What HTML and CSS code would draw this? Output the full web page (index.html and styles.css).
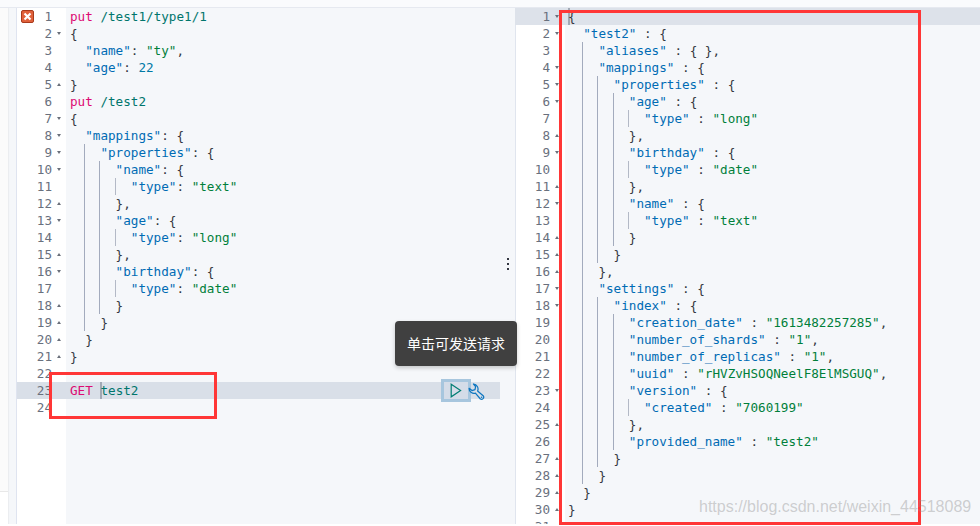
FILE: index.html
```html
<!DOCTYPE html>
<html lang="zh">
<head>
<meta charset="utf-8">
<title>Console</title>
<link rel="stylesheet" href="styles.css">
</head>
<body>
<div class="topbar"></div>
<div class="main">
  <div class="rail"><div class="rail-edge"></div></div>
  <section class="editor left">
    <div class="gutter">
      <div class="gl"><svg class="err" viewBox="0 0 13 13"><rect x="0.5" y="0.5" width="12" height="12" rx="1.5" fill="#e0603a" stroke="#a83a1c"/><path d="M3.5 3.5l6 6M9.5 3.5l-6 6" stroke="#fff" stroke-width="2.2"/></svg><span>1</span><i></i></div>
      <div class="gl"><span>2</span><i class="dn"></i></div>
      <div class="gl"><span>3</span><i></i></div>
      <div class="gl"><span>4</span><i></i></div>
      <div class="gl"><span>5</span><i class="up"></i></div>
      <div class="gl"><span>6</span><i></i></div>
      <div class="gl"><span>7</span><i class="dn"></i></div>
      <div class="gl"><span>8</span><i class="dn"></i></div>
      <div class="gl"><span>9</span><i class="dn"></i></div>
      <div class="gl"><span>10</span><i class="dn"></i></div>
      <div class="gl"><span>11</span><i></i></div>
      <div class="gl"><span>12</span><i class="up"></i></div>
      <div class="gl"><span>13</span><i class="dn"></i></div>
      <div class="gl"><span>14</span><i></i></div>
      <div class="gl"><span>15</span><i class="up"></i></div>
      <div class="gl"><span>16</span><i class="dn"></i></div>
      <div class="gl"><span>17</span><i></i></div>
      <div class="gl"><span>18</span><i class="up"></i></div>
      <div class="gl"><span>19</span><i class="up"></i></div>
      <div class="gl"><span>20</span><i class="up"></i></div>
      <div class="gl"><span>21</span><i class="up"></i></div>
      <div class="gl"><span>22</span><i></i></div>
      <div class="gl active"><span>23</span><i></i></div>
      <div class="gl"><span>24</span><i></i></div>
    </div>
    <div class="code">
<div class="ln"><b class="m">put</b> <b class="u">/test1/type1/1</b></div>
<div class="ln">{</div>
<div class="ln">  <b class="k">"name"</b>: <b class="s">"ty"</b>,</div>
<div class="ln">  <b class="k">"age"</b>: <b class="n">22</b></div>
<div class="ln">}</div>
<div class="ln"><b class="m">put</b> <b class="u">/test2</b></div>
<div class="ln">{</div>
<div class="ln">  <b class="k">"mappings"</b>: {</div>
<div class="ln">  <u>  </u><b class="k">"properties"</b>: {</div>
<div class="ln">  <u>  </u><u>  </u><b class="k">"name"</b>: {</div>
<div class="ln">  <u>  </u><u>  </u><u class="t">  </u><b class="k">"type"</b>: <b class="s">"text"</b></div>
<div class="ln">  <u>  </u><u>  </u>},</div>
<div class="ln">  <u>  </u><u>  </u><b class="k">"age"</b>: {</div>
<div class="ln">  <u>  </u><u>  </u><u class="t">  </u><b class="k">"type"</b>: <b class="s">"long"</b></div>
<div class="ln">  <u>  </u><u>  </u>},</div>
<div class="ln">  <u>  </u><u>  </u><b class="k">"birthday"</b>: {</div>
<div class="ln">  <u>  </u><u>  </u><u class="t">  </u><b class="k">"type"</b>: <b class="s">"date"</b></div>
<div class="ln">  <u>  </u><u>  </u>}</div>
<div class="ln">  <u>  </u>}</div>
<div class="ln">  }</div>
<div class="ln">}</div>
<div class="ln"> </div>
<div class="ln active"><b class="m">GET</b> <b class="u caret">t</b><b class="u">est2</b></div>
<div class="ln"> </div>
    </div>
  </section>
  <div class="resizer"><span></span><span></span><span></span></div>
  <section class="editor right">
    <div class="gutter">
      <div class="gl active"><span>1</span><i class="dn"></i></div>
      <div class="gl"><span>2</span><i class="dn"></i></div>
      <div class="gl"><span>3</span><i></i></div>
      <div class="gl"><span>4</span><i class="dn"></i></div>
      <div class="gl"><span>5</span><i class="dn"></i></div>
      <div class="gl"><span>6</span><i class="dn"></i></div>
      <div class="gl"><span>7</span><i></i></div>
      <div class="gl"><span>8</span><i class="up"></i></div>
      <div class="gl"><span>9</span><i class="dn"></i></div>
      <div class="gl"><span>10</span><i></i></div>
      <div class="gl"><span>11</span><i class="up"></i></div>
      <div class="gl"><span>12</span><i class="dn"></i></div>
      <div class="gl"><span>13</span><i></i></div>
      <div class="gl"><span>14</span><i class="up"></i></div>
      <div class="gl"><span>15</span><i class="up"></i></div>
      <div class="gl"><span>16</span><i class="up"></i></div>
      <div class="gl"><span>17</span><i class="dn"></i></div>
      <div class="gl"><span>18</span><i class="dn"></i></div>
      <div class="gl"><span>19</span><i></i></div>
      <div class="gl"><span>20</span><i></i></div>
      <div class="gl"><span>21</span><i></i></div>
      <div class="gl"><span>22</span><i></i></div>
      <div class="gl"><span>23</span><i class="dn"></i></div>
      <div class="gl"><span>24</span><i></i></div>
      <div class="gl"><span>25</span><i class="up"></i></div>
      <div class="gl"><span>26</span><i></i></div>
      <div class="gl"><span>27</span><i class="up"></i></div>
      <div class="gl"><span>28</span><i class="up"></i></div>
      <div class="gl"><span>29</span><i class="up"></i></div>
      <div class="gl"><span>30</span><i class="up"></i></div>
      <div class="gl"><span>31</span><i></i></div>
    </div>
    <div class="code">
<div class="ln active"><b class="caret">{</b></div>
<div class="ln">  <b class="k">"test2"</b> : {</div>
<div class="ln">  <u>  </u><b class="k">"aliases"</b> : { },</div>
<div class="ln">  <u>  </u><b class="k">"mappings"</b> : {</div>
<div class="ln">  <u>  </u><u>  </u><b class="k">"properties"</b> : {</div>
<div class="ln">  <u>  </u><u>  </u><u>  </u><b class="k">"age"</b> : {</div>
<div class="ln">  <u>  </u><u>  </u><u>  </u><u class="t">  </u><b class="k">"type"</b> : <b class="s">"long"</b></div>
<div class="ln">  <u>  </u><u>  </u><u>  </u>},</div>
<div class="ln">  <u>  </u><u>  </u><u>  </u><b class="k">"birthday"</b> : {</div>
<div class="ln">  <u>  </u><u>  </u><u>  </u><u class="t">  </u><b class="k">"type"</b> : <b class="s">"date"</b></div>
<div class="ln">  <u>  </u><u>  </u><u>  </u>},</div>
<div class="ln">  <u>  </u><u>  </u><u>  </u><b class="k">"name"</b> : {</div>
<div class="ln">  <u>  </u><u>  </u><u>  </u><u class="t">  </u><b class="k">"type"</b> : <b class="s">"text"</b></div>
<div class="ln">  <u>  </u><u>  </u><u>  </u>}</div>
<div class="ln">  <u>  </u><u>  </u>}</div>
<div class="ln">  <u>  </u>},</div>
<div class="ln">  <u>  </u><b class="k">"settings"</b> : {</div>
<div class="ln">  <u>  </u><u>  </u><b class="k">"index"</b> : {</div>
<div class="ln">  <u>  </u><u>  </u><u>  </u><b class="k">"creation_date"</b> : <b class="s">"1613482257285"</b>,</div>
<div class="ln">  <u>  </u><u>  </u><u>  </u><b class="k">"number_of_shards"</b> : <b class="s">"1"</b>,</div>
<div class="ln">  <u>  </u><u>  </u><u>  </u><b class="k">"number_of_replicas"</b> : <b class="s">"1"</b>,</div>
<div class="ln">  <u>  </u><u>  </u><u>  </u><b class="k">"uuid"</b> : <b class="s">"rHVZvHSOQNeelF8ElMSGUQ"</b>,</div>
<div class="ln">  <u>  </u><u>  </u><u>  </u><b class="k">"version"</b> : {</div>
<div class="ln">  <u>  </u><u>  </u><u>  </u><u class="t">  </u><b class="k">"created"</b> : <b class="s">"7060199"</b></div>
<div class="ln">  <u>  </u><u>  </u><u>  </u>},</div>
<div class="ln">  <u>  </u><u>  </u><u>  </u><b class="k">"provided_name"</b> : <b class="s">"test2"</b></div>
<div class="ln">  <u>  </u><u>  </u>}</div>
<div class="ln">  <u>  </u>}</div>
<div class="ln">  }</div>
<div class="ln">}</div>
    </div>
  </section>
</div>
<div class="tooltip">单击可发送请求</div>
<div class="play"><svg width="12" height="15" viewBox="0 0 12 15"><path d="M1.2 1.2L10.6 7.5 1.2 13.8Z" fill="none" stroke="#017d73" stroke-width="1.2"/></svg></div>
<svg class="wrench" width="17" height="18" viewBox="0 0 17 18"><path d="M5.5 1A5 5 0 0 1 9.6 8L15.4 13A2.2 2.2 0 0 1 12.4 16L7.4 10.2A5 5 0 0 1 1.1 5.3L4 7.6 7 6.6 7.6 3.6Z" fill="none" stroke="#0f77c0" stroke-width="1.25" stroke-linejoin="round"/><circle cx="13.6" cy="14.2" r=".8" fill="#0f77c0"/></svg>
<div class="mark mark-left"></div>
<div class="mark mark-right"></div>
<div class="watermark">https://blog.csdn.net/weixin_44518089</div>
</body>
</html>
```
FILE: styles.css
```css
* { box-sizing: border-box; }
html, body { margin: 0; padding: 0; height: 526px; overflow: hidden; background: #fff; }
body { display: flex; flex-direction: column; }
.topbar { height: 8px; flex: none; background: #fafbfd; border-bottom: 1px solid #e6e9f0; }
.main { display: flex; height: 516px; flex: none; overflow: hidden; }
.rail { width: 17px; flex: none; background: #f5f7fa; border-right: 1px solid #dfe4f0; }
.rail-edge { width: 8px; height: 100%; background: linear-gradient(#fbfbfb 483px, #e8e8e8 483px, #e8e8e8 484px, #fff 484px); box-shadow: 1px 0 1px rgba(0,0,0,.04); }
.editor { display: flex; overflow: hidden; font: 12.63px/17px "DejaVu Sans Mono", monospace; color: #343741; }
.left { width: 483px; flex: none; }
.right { flex: 1; }
.gutter { flex: none; background: #fff; color: #69707d; }
.left .gutter { width: 49px; }
.right .gutter { width: 50px; box-shadow: inset 1px 0 #e0e5ee; }
.code { flex: 1; min-width: 0; background: #f5f7fa; }
.gl { height: 17px; display: flex; justify-content: flex-end; align-items: center; }
.gl i { width: 14px; height: 17px; display: block; position: relative; flex: none; }
.right .gl i { width: 15px; }
.gl .dn::after, .gl .up::after { content: ""; position: absolute; left: 5px; top: 7px; border-left: 2.5px solid transparent; border-right: 2.5px solid transparent; }
.gl .dn::after { border-top: 3px solid #6a6f7a; }
.gl .up::after { border-bottom: 3px solid #6a6f7a; }
.err { width: 13px; height: 13px; margin-right: auto; margin-left: 4px; }
.gl.active, .right .ln.active { background: #dde2ea; }
.left .gl.active, .left .ln.active { background: #d9dfe8; }
.ln { height: 17px; white-space: pre; padding-left: 4px; }
.right .ln { padding-left: 3px; }
.ln b { font-weight: 400; }
.ln u { text-decoration: none; display: inline-block; height: 17px; vertical-align: top; margin-left: -1px; padding-left: 1px; box-shadow: inset 1px 0 #a3abbd; }
.ln u.t { box-shadow: inset 1px 0 #b3b9c6; }
.m { color: #dd0a73; }
.u { color: #00756c; }
.k { color: #006bb4; }
.s { color: #017f3a; }
.n { color: #0079a5; }
.caret { display: inline-block; height: 17px; vertical-align: top; box-shadow: inset 2px 0 #a1a9b5; }
.resizer { width: 15px; flex: none; background: #f5f7fa; display: flex; flex-direction: column; align-items: center; justify-content: flex-start; gap: 3px; padding-top: 250px; }
.resizer span { width: 2px; height: 2px; background: #343741; flex: none; }
.tooltip { position: absolute; left: 395px; top: 321px; width: 122px; height: 45px; background: #404040; color: #fff; border-radius: 4px; font: 14px/44px "Noto Sans CJK SC", sans-serif; text-align: center; box-shadow: 0 2px 4px rgba(0,0,0,.2); }
.tooltip::after { content: ""; position: absolute; left: 55px; top: 39px; width: 11px; height: 11px; background: #404040; transform: rotate(45deg); z-index: -1; }
.play { position: absolute; left: 441px; top: 379px; width: 30px; height: 23px; border: 3px solid #a7c6de; background: #d4dce8; display: flex; align-items: center; justify-content: center; }
.wrench { position: absolute; left: 468px; top: 383px; }
.mark { position: absolute; border: 3px solid #ff3636; }
.mark-left { left: 49px; top: 372px; width: 168px; height: 47px; }
.mark-right { left: 559px; top: 10px; width: 362px; height: 515px; }
.watermark { position: absolute; left: 699px; top: 496px; font: 16px/22px "Liberation Sans", sans-serif; color: rgba(140,140,140,.4); white-space: nowrap; }
```
